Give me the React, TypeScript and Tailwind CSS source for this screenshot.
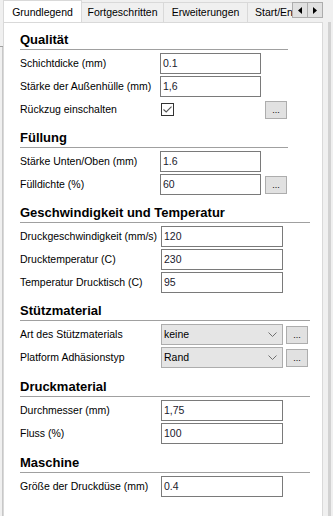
import React from "react";

type Row =
  | { label: string; kind: "input"; value: string; more?: boolean }
  | { label: string; kind: "check"; more?: boolean }
  | { label: string; kind: "combo"; value: string; more?: boolean };

type Section = {
  title: string;
  narrow: boolean; // first two groups use a narrower column
  gap: string;
  rows: Row[];
};

const sections: Section[] = [
  {
    title: "Qualität",
    narrow: true,
    gap: "mt-0",
    rows: [
      { label: "Schichtdicke (mm)", kind: "input", value: "0.1" },
      { label: "Stärke der Außenhülle (mm)", kind: "input", value: "1,6" },
      { label: "Rückzug einschalten", kind: "check", more: true },
    ],
  },
  {
    title: "Füllung",
    narrow: true,
    gap: "mt-[10px]",
    rows: [
      { label: "Stärke Unten/Oben (mm)", kind: "input", value: "1.6" },
      { label: "Fülldichte (%)", kind: "input", value: "60", more: true },
    ],
  },
  {
    title: "Geschwindigkeit und Temperatur",
    narrow: false,
    gap: "mt-[10px]",
    rows: [
      { label: "Druckgeschwindigkeit (mm/s)", kind: "input", value: "120" },
      { label: "Drucktemperatur (C)", kind: "input", value: "230" },
      { label: "Temperatur Drucktisch (C)", kind: "input", value: "95" },
    ],
  },
  {
    title: "Stützmaterial",
    narrow: false,
    gap: "mt-[10px]",
    rows: [
      { label: "Art des Stützmaterials", kind: "combo", value: "keine", more: true },
      { label: "Platform Adhäsionstyp", kind: "combo", value: "Rand", more: true },
    ],
  },
  {
    title: "Druckmaterial",
    narrow: false,
    gap: "mt-[11px]",
    rows: [
      { label: "Durchmesser (mm)", kind: "input", value: "1,75" },
      { label: "Fluss (%)", kind: "input", value: "100" },
    ],
  },
  {
    title: "Maschine",
    narrow: false,
    gap: "mt-[11px]",
    rows: [{ label: "Größe der Druckdüse (mm)", kind: "input", value: "0.4" }],
  },
];

function MoreButton() {
  return (
    <div className="ml-[4px] flex h-[18px] w-[22px] items-end justify-center border border-[#adadad] bg-[#e1e1e1] pb-[3px] text-[9px] leading-none text-black">
      ...
    </div>
  );
}

function Chevron() {
  return (
    <svg width="9" height="5" viewBox="0 0 9 5" className="mr-[5px]">
      <path d="M0.5 0.5 L4.5 4.5 L8.5 0.5" fill="none" stroke="#707070" strokeWidth="1" />
    </svg>
  );
}

function Arrow({ dir }: { dir: "left" | "right" }) {
  return (
    <div className="flex h-[16px] w-[16px] items-center justify-center border border-[#adadad] bg-[#e1e1e1]">
      <svg width="4" height="7" viewBox="0 0 4 7">
        {dir === "left" ? <path d="M4 0 L0 3.5 L4 7 Z" fill="#000" /> : <path d="M0 0 L4 3.5 L0 7 Z" fill="#000" />}
      </svg>
    </div>
  );
}

function Control({ row, narrow }: { row: Row; narrow: boolean }) {
  const width = narrow ? "w-[101px]" : "w-[122px]";
  if (row.kind === "check") {
    return (
      <div className={`${width} flex items-center`}>
        <div className="ml-px flex h-[13px] w-[13px] items-center justify-center border border-[#333333] bg-white">
          <svg width="9" height="7" viewBox="0 0 9 7">
            <path d="M0.5 3.5 L3.2 6 L8.5 0.6" fill="none" stroke="#555555" strokeWidth="1.1" />
          </svg>
        </div>
      </div>
    );
  }
  if (row.kind === "combo") {
    return (
      <div className={`${width} flex h-[21px] items-center justify-between border border-[#adadad] bg-[#e5e5e5] pl-[2px]`}>
        <span>{row.value}</span>
        <Chevron />
      </div>
    );
  }
  return (
    <div className={`${width} flex h-[21px] items-center border border-[#7a7a7a] bg-white pl-[2px] text-[#1a1a2e]`}>
      {row.value}
    </div>
  );
}

function Group({ s }: { s: Section }) {
  return (
    <div className={s.gap}>
      <div
        className={`${s.narrow ? "w-[268px]" : "w-[290px]"} border-b border-[#a0a0a0] pb-px text-[13px] font-bold leading-[16px] text-black`}
      >
        {s.title}
      </div>
      <div className="mt-[3px] flex flex-col gap-[2px]">
        {s.rows.map((r) => (
          <div key={r.label} className="flex h-[21px] items-center">
            <div className={`${s.narrow ? "w-[140px]" : "w-[141px]"} whitespace-nowrap`}>{r.label}</div>
            <Control row={r} narrow={s.narrow} />
            {r.more && (s.narrow ? <MoreButton /> : <div className="-ml-px"><MoreButton /></div>)}
          </div>
        ))}
      </div>
    </div>
  );
}

export default function App() {
  return (
    <div
      className="flex h-[516px] w-[333px] flex-col overflow-hidden bg-[#f0f0f0] text-[10.5px] text-black"
      style={{ fontFamily: '"Liberation Sans", Arial, sans-serif' }}
    >
      <div className="flex h-[22px]">
        <div className="w-[3px]" />
        <div className="flex h-full w-[289px] items-end overflow-hidden">
          <div className="relative z-10 -mb-px flex h-[23px] w-[79px] shrink-0 items-start justify-center border-x border-t border-[#d9d9d9] bg-white pt-[4px]">
            Grundlegend
          </div>
          <div className="flex h-[20px] w-[82px] shrink-0 items-center justify-center border-r border-t border-[#d9d9d9] pt-px">
            Fortgeschritten
          </div>
          <div className="flex h-[20px] w-[84px] shrink-0 items-center justify-center border-r border-t border-[#d9d9d9] pt-px">
            Erweiterungen
          </div>
          <div className="flex h-[20px] w-[90px] shrink-0 items-center whitespace-nowrap border-r border-t border-[#d9d9d9] pl-[7px] pt-px">
            Start/Ende-GCode
          </div>
        </div>
        <div className="mt-[2px] flex">
          <Arrow dir="left" />
          <div className="-ml-px">
            <Arrow dir="right" />
          </div>
        </div>
      </div>

      <div className="flex flex-1">
        <div className="flex w-[3px] flex-col">
          <div className="h-[25px] border-b border-[#a0a0a0]" />
          <div className="flex flex-1">
            <div className="w-[2px]" />
            <div className="w-px bg-[#c8c8c8]" />
          </div>
        </div>
        <div className="w-[320px] border-l border-r border-t border-[#d9d9d9] bg-white pl-[16px] pt-[9px]">
          {sections.map((s) => (
            <Group key={s.title} s={s} />
          ))}
        </div>
        <div className="flex w-[10px]">
          <div className="w-[5px]" />
          <div className="w-[3px] bg-[#d2d2d2]" />
        </div>
      </div>
    </div>
  );
}
